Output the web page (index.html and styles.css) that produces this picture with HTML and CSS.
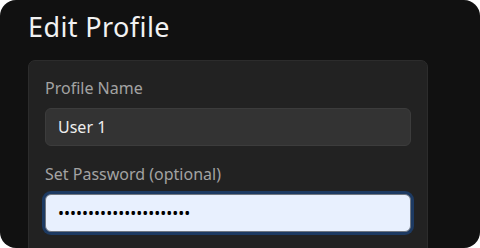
FILE: index.html
```html
<!DOCTYPE html>
<html lang="en">
  <head>
    <meta charset="UTF-8" />
    <meta name="viewport" content="width=device-width, initial-scale=1.0" />
    <title>Edit Profile</title>
    <link rel="stylesheet" href="styles.css">
  </head>
  <body>
    <div class="window">
      <h1 class="title">Edit Profile</h1>
      <div class="card">
        <div class="form-controller">
          <label for="profile-name">Profile Name</label>
          <input type="text" id="profile-name" value="User 1" />
        </div>
        <div class="form-controller">
          <label for="profile-password">Set Password (optional)</label>
          <input
            type="password"
            id="profile-password"
            class="filled focused"
            value="secretpassword12345678"
          />
        </div>
      </div>
    </div>
  </body>
</html>
```

FILE: styles.css
```css
* {
  padding: 0;
  margin: 0;
  box-sizing: border-box;
  font-family: "Noto Sans", "Open Sans", sans-serif;
}

body {
  background-color: #fff;
}

.window {
  width: 480px;
  height: 248px;
  padding: 10px 52px 0 28px;
  background-color: #111;
  border-radius: 16px;
  overflow: hidden;
}

.title {
  font-size: 27px;
  font-weight: 400;
  letter-spacing: 0.4px;
  line-height: 33px;
  color: #f2f2f2;
  margin-bottom: 17px;
}

.card {
  padding: 16px;
  background-color: #222;
  border: 1px solid #2c2c2c;
  border-radius: 7px;
}

.form-controller {
  display: flex;
  flex-direction: column;
  margin-bottom: 17px;
}

.form-controller label {
  font-size: 16px;
  line-height: 22px;
  color: #a3a3a3;
  margin-bottom: 9px;
}

.form-controller input {
  height: 38px;
  padding: 0 12px;
  font-size: 16px;
  border-radius: 6px;
  border: 1px solid #3c3c3c;
  outline: none;
  background-color: #333;
  color: #eee;
}

.form-controller input.filled {
  background-color: #e8f0fe;
  border-color: #6f7680;
  color: #000;
}

.form-controller input.focused {
  box-shadow: 0 0 0 3px #1d3a62;
}
```
